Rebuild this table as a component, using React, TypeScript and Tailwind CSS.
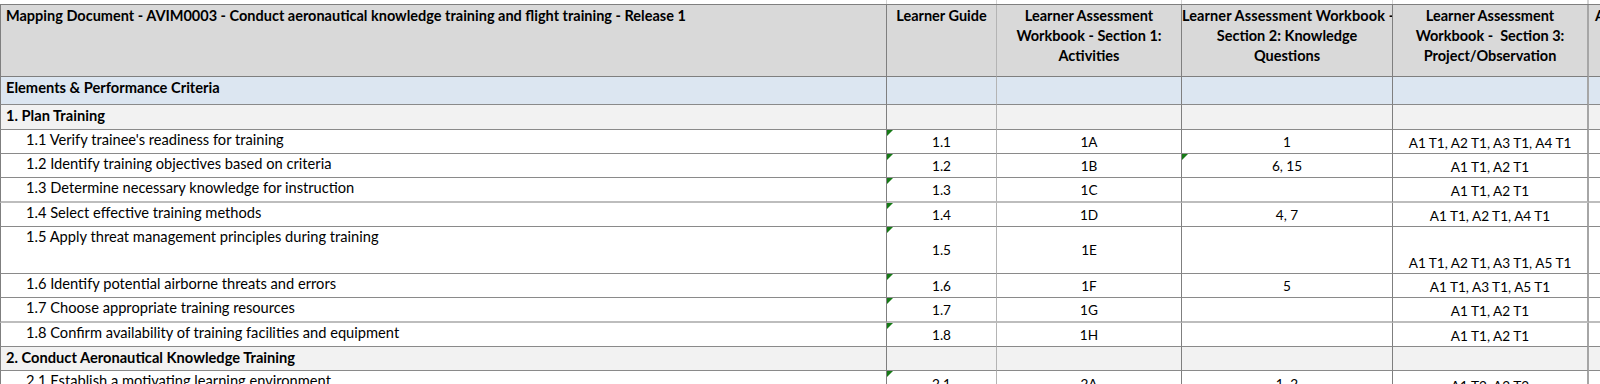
import React from "react";

type Row = {
  a: string;
  b: string;
  c: string;
  d: string;
  e: string;
  h: string;
  light?: boolean;
  dFlag?: boolean;
};

const rows: Row[] = [
  { a: "1.1 Verify trainee's readiness for training", b: "1.1", c: "1A", d: "1", e: "A1 T1, A2 T1, A3 T1, A4 T1", h: "h-[24px]" },
  { a: "1.2 Identify training objectives based on criteria", b: "1.2", c: "1B", d: "6, 15", e: "A1 T1, A2 T1", h: "h-[24px]", dFlag: true },
  { a: "1.3 Determine necessary knowledge for instruction", b: "1.3", c: "1C", d: "", e: "A1 T1, A2 T1", h: "h-[25px]", light: true },
  { a: "1.4 Select effective training methods", b: "1.4", c: "1D", d: "4, 7", e: "A1 T1, A2 T1, A4 T1", h: "h-[24px]" },
  { a: "1.5 Apply threat management principles during training", b: "1.5", c: "1E", d: "", e: "A1 T1, A2 T1, A3 T1, A5 T1", h: "h-[47px]" },
  { a: "1.6 Identify potential airborne threats and errors", b: "1.6", c: "1F", d: "5", e: "A1 T1, A3 T1, A5 T1", h: "h-[24px]" },
  { a: "1.7 Choose appropriate training resources", b: "1.7", c: "1G", d: "", e: "A1 T1, A2 T1", h: "h-[25px]", light: true },
  { a: "1.8 Confirm availability of training facilities and equipment", b: "1.8", c: "1H", d: "", e: "A1 T1, A2 T1", h: "h-[24px]" },
];

const GRID = "grid grid-cols-[887px_110px_185px_211px_196px_11px]";

const colA = "border-l border-l-[#7f7f7f] border-r border-r-[#7f7f7f]";
const colB = "border-r border-r-[#b4b4b4]";
const colC = "border-r border-r-[#7f7f7f]";
const colD = "border-r border-r-[#7f7f7f]";
const colE = "border-r-2 border-r-[#a6a6a6]";
const colF = "";

function Flag() {
  return (
    <span className="absolute left-0 top-0 w-0 h-0 border-t-[6px] border-t-[#177a17] border-r-[6px] border-r-transparent" />
  );
}

function DataRow({ r }: { r: Row }) {
  const bb = r.light ? "border-b-2 border-b-[#bdbdbd]" : "border-b border-b-[#8a8a8a]";
  const base = `${r.h} ${bb} bg-white relative overflow-hidden`;
  return (
    <>
      <div className={`${base} ${colA} pl-[25px] pt-0 leading-[20px] text-[14.67px] whitespace-nowrap`}>{r.a}</div>
      <div className={`${base} ${colB} flex items-center justify-center leading-[20px]`}>
        <Flag />
        {r.b}
      </div>
      <div className={`${base} ${colC} flex items-center justify-center leading-[20px]`}>{r.c}</div>
      <div className={`${base} ${colD} flex items-center justify-center leading-[20px]`}>
        {r.dFlag ? <Flag /> : null}
        {r.d}
      </div>
      <div className={`${base} ${colE} flex items-end justify-center leading-[20px] whitespace-nowrap`}>{r.e}</div>
      <div className={`${base} ${colF}`} />
    </>
  );
}

function SectionRow({ title, h, bg }: { title: string; h: string; bg: string }) {
  const base = `${h} ${bg} border-b border-b-[#8a8a8a] relative overflow-hidden`;
  return (
    <>
      <div className={`${base} ${colA} pl-[5px] pt-[1px] leading-[20px] text-[14.67px] font-bold whitespace-nowrap`}>{title}</div>
      <div className={`${base} ${colB}`} />
      <div className={`${base} ${colC}`} />
      <div className={`${base} ${colD}`} />
      <div className={`${base} ${colE}`} />
      <div className={`${base} ${colF}`} />
    </>
  );
}

export default function App() {
  const head = "h-[72px] bg-[#d9d9d9] border-b border-b-[#7f7f7f] font-bold leading-[20px] pt-[1px] text-[14.5px] overflow-hidden";
  return (
    <div className="w-[1600px] h-[384px] overflow-hidden bg-white text-black text-[13.6px] font-[Lato,'Open_Sans',sans-serif]">
      {/* strip above the table */}
      <div className={`${GRID} h-[4px]`}>
        <div className="border-r border-r-[#d4d4d4]" />
        <div className="border-r border-r-[#d4d4d4]" />
        <div className="border-r border-r-[#d4d4d4]" />
        <div className="border-r border-r-[#d4d4d4]" />
        <div className="border-r-2 border-r-[#d4d4d4]" />
        <div />
      </div>
      <div className={`${GRID} border-t border-t-[#7f7f7f]`}>
        {/* header */}
        <div className={`${head} ${colA} pl-[5px] whitespace-nowrap`}>
          Mapping Document - AVIM0003 - Conduct aeronautical knowledge training and flight training - Release 1
        </div>
        <div className={`${head} ${colB} text-center whitespace-nowrap`}>Learner Guide</div>
        <div className={`${head} ${colC} text-center whitespace-nowrap`}>
          Learner Assessment
          <br />
          Workbook - Section 1:
          <br />
          Activities
        </div>
        <div className={`${head} ${colD} text-center whitespace-nowrap`}>
          <span className="tracking-[0.1px]">Learner Assessment Workbook -</span>
          <br />
          Section 2: Knowledge
          <br />
          Questions
        </div>
        <div className={`${head} ${colE} text-center whitespace-pre`}>
          {"Learner Assessment\nWorkbook -  Section 3:\nProject/Observation"}
        </div>
        <div className={`${head} ${colF} pl-[6px] whitespace-nowrap`}>Assessment</div>

        <SectionRow title="Elements & Performance Criteria" h="h-[28px]" bg="bg-[#dce6f1]" />
        <SectionRow title="1. Plan Training" h="h-[25px]" bg="bg-[#f2f2f2]" />
        {rows.map((r) => (
          <DataRow key={r.b} r={r} />
        ))}
        <SectionRow title="2. Conduct Aeronautical Knowledge Training" h="h-[24px]" bg="bg-[#f2f2f2]" />
        <DataRow
          r={{
            a: "2.1 Establish a motivating learning environment",
            b: "2.1",
            c: "2A",
            d: "1, 2",
            e: "A1 T2, A2 T2",
            h: "h-[26px]",
          }}
        />
      </div>
    </div>
  );
}
